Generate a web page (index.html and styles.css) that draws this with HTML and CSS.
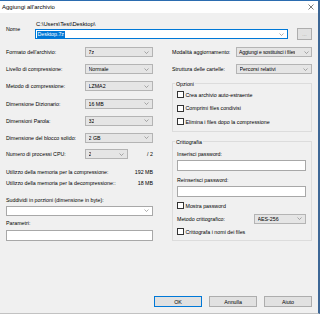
FILE: index.html
```html
<!DOCTYPE html>
<html lang="it">
<head>
    <meta charset="UTF-8">
    <meta name="viewport" content="width=device-width, initial-scale=1.0">
    <title>Aggiungi all'archivio</title>
    <link rel="stylesheet" href="styles.css">
</head>
<body>
    <div class="window">
        <div class="titlebar">
            <span class="title">Aggiungi all'archivio</span>
            <svg class="close" width="6" height="6" viewBox="0 0 6 6"><path d="M0.5 0.5 L5.5 5.5 M5.5 0.5 L0.5 5.5" stroke="#444" stroke-width="0.7"/></svg>
        </div>

        <div class="main">
            <!-- Nome archivio -->
            <div class="name-row">
                <span class="name-label">Nome</span>
                <div class="name-field">
                    <div class="path">C:\Users\Test\Desktop\</div>
                    <div class="name-line">
                        <div class="combo edit focus">
                            <span class="sel">Desktop.7z</span>
                            <svg class="chev" width="5" height="3" viewBox="0 0 5 3"><path d="M0.5 0.5 L2.5 2.5 L4.5 0.5" fill="none" stroke="#777" stroke-width="0.6"/></svg>
                        </div>
                        <div class="btn browse">...</div>
                    </div>
                </div>
            </div>

            <div class="cols">
                <!-- Colonna sinistra -->
                <div class="left">
                    <div class="row">
                        <span class="lbl">Formato dell'archivio:</span>
                        <div class="combo list w68"><span>7z</span><svg class="chev" width="5" height="3" viewBox="0 0 5 3"><path d="M0.5 0.5 L2.5 2.5 L4.5 0.5" fill="none" stroke="#777" stroke-width="0.6"/></svg></div>
                    </div>
                    <div class="row">
                        <span class="lbl">Livello di compressione:</span>
                        <div class="combo list w68"><span>Normale</span><svg class="chev" width="5" height="3" viewBox="0 0 5 3"><path d="M0.5 0.5 L2.5 2.5 L4.5 0.5" fill="none" stroke="#777" stroke-width="0.6"/></svg></div>
                    </div>
                    <div class="row">
                        <span class="lbl">Metodo di compressione:</span>
                        <div class="combo list w68"><span>LZMA2</span><svg class="chev" width="5" height="3" viewBox="0 0 5 3"><path d="M0.5 0.5 L2.5 2.5 L4.5 0.5" fill="none" stroke="#777" stroke-width="0.6"/></svg></div>
                    </div>
                    <div class="row">
                        <span class="lbl">Dimensione Dizionario:</span>
                        <div class="combo list w68"><span>16 MB</span><svg class="chev" width="5" height="3" viewBox="0 0 5 3"><path d="M0.5 0.5 L2.5 2.5 L4.5 0.5" fill="none" stroke="#777" stroke-width="0.6"/></svg></div>
                    </div>
                    <div class="row">
                        <span class="lbl">Dimensioni Parola:</span>
                        <div class="combo list w68"><span>32</span><svg class="chev" width="5" height="3" viewBox="0 0 5 3"><path d="M0.5 0.5 L2.5 2.5 L4.5 0.5" fill="none" stroke="#777" stroke-width="0.6"/></svg></div>
                    </div>
                    <div class="row">
                        <span class="lbl">Dimensione del blocco solido:</span>
                        <div class="combo list w68"><span>2 GB</span><svg class="chev" width="5" height="3" viewBox="0 0 5 3"><path d="M0.5 0.5 L2.5 2.5 L4.5 0.5" fill="none" stroke="#777" stroke-width="0.6"/></svg></div>
                    </div>
                    <div class="row cpu">
                        <span class="lbl">Numero di processi CPU:</span>
                        <div class="combo list w43"><span>2</span><svg class="chev" width="5" height="3" viewBox="0 0 5 3"><path d="M0.5 0.5 L2.5 2.5 L4.5 0.5" fill="none" stroke="#777" stroke-width="0.6"/></svg></div>
                        <span class="cpu-max">/ 2</span>
                    </div>

                    <div class="mem">
                        <div class="mem-line"><span>Utilizzo della memoria per la compressione:</span><span>192 MB</span></div>
                        <div class="mem-line"><span>Utilizzo della memoria per la decompressione::</span><span>18 MB</span></div>
                    </div>

                    <div class="field-label split-label">Suddividi in porzioni (dimensione in byte):</div>
                    <div class="combo edit full"><span></span><svg class="chev" width="5" height="3" viewBox="0 0 5 3"><path d="M0.5 0.5 L2.5 2.5 L4.5 0.5" fill="none" stroke="#777" stroke-width="0.6"/></svg></div>

                    <div class="field-label param-label">Parametri:</div>
                    <div class="textbox"></div>
                </div>

                <!-- Colonna destra -->
                <div class="right">
                    <div class="row">
                        <span class="lbl lbl-r">Modalità aggiornamento:</span>
                        <div class="combo list w76 tight"><span>Aggiungi e sostituisci i files</span><svg class="chev" width="5" height="3" viewBox="0 0 5 3"><path d="M0.5 0.5 L2.5 2.5 L4.5 0.5" fill="none" stroke="#777" stroke-width="0.6"/></svg></div>
                    </div>
                    <div class="row">
                        <span class="lbl lbl-r">Struttura delle cartelle:</span>
                        <div class="combo list w76"><span>Percorsi relativi</span><svg class="chev" width="5" height="3" viewBox="0 0 5 3"><path d="M0.5 0.5 L2.5 2.5 L4.5 0.5" fill="none" stroke="#777" stroke-width="0.6"/></svg></div>
                    </div>

                    <fieldset class="group options">
                        <legend>Opzioni</legend>
                        <label class="check"><span class="box"></span>Crea archivio auto-estraente</label>
                        <label class="check"><span class="box"></span>Comprimi files condivisi</label>
                        <label class="check"><span class="box"></span>Elimina i files dopo la compressione</label>
                    </fieldset>

                    <fieldset class="group crypto">
                        <legend>Crittografia</legend>
                        <div class="field-label">Inserisci password:</div>
                        <div class="textbox"></div>
                        <div class="field-label">Reinserisci password:</div>
                        <div class="textbox"></div>
                        <label class="check show-pw"><span class="box"></span>Mostra password</label>
                        <div class="method-row">
                            <span>Metodo crittografico:</span>
                            <div class="combo list w52"><span>AES-256</span><svg class="chev" width="5" height="3" viewBox="0 0 5 3"><path d="M0.5 0.5 L2.5 2.5 L4.5 0.5" fill="none" stroke="#777" stroke-width="0.6"/></svg></div>
                        </div>
                        <label class="check"><span class="box"></span>Crittografa i nomi dei files</label>
                    </fieldset>
                </div>
            </div>

            <div class="buttons">
                <div class="btn default">OK</div>
                <div class="btn">Annulla</div>
                <div class="btn">Aiuto</div>
            </div>
        </div>
    </div>
</body>
</html>
```

FILE: styles.css
```css
* {
    box-sizing: border-box;
}

body {
    margin: 0;
    font-family: "Liberation Sans", Arial, sans-serif;
    font-size: 5.3px;
    color: #000;
    background: #fff;
}

.window {
    width: 320px;
    height: 314px;
    background: #f0f0f0;
    border-top: 1px solid #2b6cb0;
    border-right: 2px solid #3d6796;
    border-bottom: 1px solid #c2c2c2;
    display: flex;
    flex-direction: column;
}

.titlebar {
    height: 12px;
    background: #fff;
    display: flex;
    align-items: center;
    justify-content: space-between;
    padding: 0 4px 0 2px;
    font-size: 6px;
}

.main {
    flex: 1;
    display: flex;
    flex-direction: column;
    padding: 7px 6px 6px 6px;
}

/* riga nome */
.name-row {
    display: grid;
    grid-template-columns: 29px 1fr;
}

.name-label {
    padding-top: 5px;
    line-height: 8px;
}

.path {
    height: 8px;
    line-height: 8px;
    font-size: 5.8px;
    padding-left: 1px;
}

.name-line {
    display: flex;
    align-items: center;
    height: 12px;
}

.name-line .combo {
    width: 253px;
    flex-shrink: 0;
}

.btn.browse {
    width: 15px;
    height: 12px;
    margin-left: 9px;
    color: #999;
}

.sel {
    background: #0078d7;
    color: #fff;
    padding: 0 1px;
    line-height: 7px;
}

/* combobox */
.combo {
    height: 10px;
    display: flex;
    align-items: center;
    justify-content: space-between;
    padding: 0 3px 0 2.5px;
    white-space: nowrap;
    overflow: hidden;
}

.combo span {
    overflow: hidden;
}

.combo .chev {
    flex-shrink: 0;
    margin-left: 1px;
}

.combo.tight {
    padding-left: 2px;
    padding-right: 2px;
    font-size: 5px;
    letter-spacing: -0.1px;
}

.combo.list {
    background: #e5e5e5;
    border: 1px solid #b4b4b4;
}

.combo.edit {
    background: #fff;
    border: 1px solid #a8a8a8;
}

.combo.focus {
    border-color: #0078d7;
    padding-left: 0.5px;
}

.w68 { width: 68px; }
.w43 { width: 43px; }
.w76 { width: 76px; }
.w52 { width: 52px; }
.full { width: 100%; }

.textbox {
    height: 11px;
    background: #fff;
    border: 1px solid #a8a8a8;
}

/* colonne */
.cols {
    display: grid;
    grid-template-columns: 147px 140px;
    column-gap: 19px;
    margin-top: 7px;
}

.row {
    display: flex;
    align-items: center;
    height: 10px;
    margin-bottom: 7.2px;
}

.lbl {
    width: 79px;
    flex-shrink: 0;
    white-space: nowrap;
}

.lbl-r {
    width: 64px;
}

.row.cpu {
    margin-top: -1px;
}

.cpu-max {
    margin-left: auto;
}

.mem {
    margin-top: 1.5px;
}

.mem-line {
    display: flex;
    justify-content: space-between;
    height: 11px;
    align-items: center;
}

.field-label {
    height: 8px;
    line-height: 8px;
}

.split-label {
    margin-top: 8px;
    margin-bottom: 1.5px;
}

.param-label {
    margin-top: 3.5px;
    margin-bottom: 2.5px;
}

/* gruppi */
.group {
    margin: 0;
    border: 1px solid #dcdcdc;
    padding: 4px 5px 4px 4px;
    min-width: 0;
}

.group legend {
    padding: 0 1px;
    margin-left: -2px;
    line-height: 6px;
}

.options {
    margin-top: -0.7px;
    padding-bottom: 5px;
}

.options .check + .check {
    margin-top: 5.5px;
}

.crypto {
    margin-top: 7px;
    padding-top: 5px;
}

.crypto .textbox {
    margin-top: 2px;
    margin-bottom: 5px;
}

.check {
    display: flex;
    align-items: center;
    gap: 1.5px;
    height: 8px;
    white-space: nowrap;
}

.box {
    width: 7px;
    height: 7px;
    border: 1px solid #333;
    background: #fff;
}

.show-pw {
    margin-top: 1px;
}

.method-row {
    display: flex;
    align-items: center;
    justify-content: space-between;
    height: 10px;
    margin: 4px 0;
}

/* pulsanti */
.buttons {
    margin-top: auto;
    display: flex;
    justify-content: flex-end;
    gap: 7px;
}

.btn {
    width: 48px;
    height: 11px;
    display: flex;
    align-items: center;
    justify-content: center;
    background: #e1e1e1;
    border: 1px solid #adadad;
}

.btn.default {
    border-color: #0078d7;
}
```
